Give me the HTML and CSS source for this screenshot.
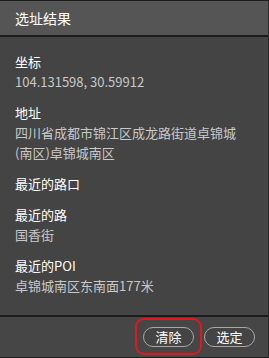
FILE: index.html
```html
<!DOCTYPE html>
<html lang="zh-CN">
<head>
<meta charset="utf-8">
<title>选址结果</title>
<link rel="stylesheet" href="styles.css">
</head>
<body>
<div class="panel">
  <div class="header">选址结果</div>
  <div class="content">
    <div class="item">
      <div class="label">坐标</div>
      <div class="value">104.131598, 30.59912</div>
    </div>
    <div class="item">
      <div class="label">地址</div>
      <div class="value">四川省成都市锦江区成龙路街道卓锦城(南区)卓锦城南区</div>
    </div>
    <div class="item">
      <div class="label">最近的路口</div>
    </div>
    <div class="item">
      <div class="label">最近的路</div>
      <div class="value">国香街</div>
    </div>
    <div class="item">
      <div class="label">最近的POI</div>
      <div class="value">卓锦城南区东南面177米</div>
    </div>
  </div>
  <div class="footer">
    <div class="btn-wrap">
      <button class="btn">清除</button>
      <span class="highlight"></span>
    </div>
    <button class="btn">选定</button>
  </div>
</div>
</body>
</html>
```

FILE: styles.css
```css
html, body {
  margin: 0;
  padding: 0;
  background: #444444;
}
.panel {
  width: 268px;
  height: 357px;
  border-top: 1px solid #1c1c1c;
  border-right: 1px solid #2a2a2a;
  display: flex;
  flex-direction: column;
  font-family: "Noto Sans CJK SC", "Noto Sans", sans-serif;
  background: #444444;
}
.header {
  height: 34px;
  background: #555555;
  border-bottom: 2px solid #1c1c1c;
  color: #ffffff;
  font-size: 14px;
  line-height: 34px;
  padding-left: 15px;
  flex: none;
}
.content {
  flex: 1;
  padding: 15px 15px 0 15px;
  display: flex;
  flex-direction: column;
  gap: 11px;
}
.label {
  color: #ffffff;
  font-size: 13px;
  line-height: 20px;
}
.value {
  color: #c8c8c8;
  font-size: 13px;
  line-height: 20px;
}
.footer {
  flex: none;
  height: 40px;
  border-top: 2px solid #1c1c1c;
  border-bottom: 1px solid #1c1c1c;
  background: #464646;
  display: flex;
  align-items: center;
  justify-content: flex-end;
  gap: 10px;
  padding-right: 13px;
}
.btn-wrap {
  position: relative;
  display: flex;
}
.btn {
  width: 51px;
  height: 20px;
  border: 1px solid #a8a8a8;
  border-radius: 10px;
  background: #444444;
  color: #ffffff;
  font-family: "Noto Sans CJK SC", "Noto Sans", sans-serif;
  font-size: 13px;
  line-height: 18px;
  padding: 0;
}
.highlight {
  position: absolute;
  left: -8px;
  top: -9px;
  width: 63px;
  height: 33px;
  border: 2px solid #e4161e;
  border-radius: 9px;
}
```
